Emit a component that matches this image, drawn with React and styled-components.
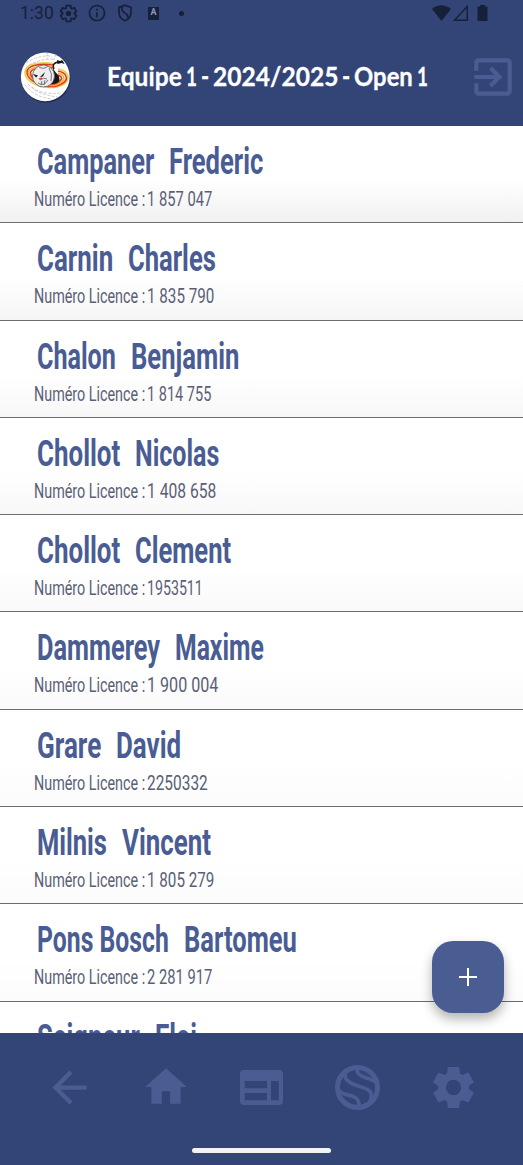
import React, { useLayoutEffect, useRef, useState } from "react";
import styled, { createGlobalStyle } from "styled-components";
import { MdArrowBack, MdHome, MdExitToApp, MdInfoOutline } from "react-icons/md";

const NAVY = "#334577";
const SLATE = "#4a5d92";
const INK = "#17203a";

const GlobalStyle = createGlobalStyle`
  * { box-sizing: border-box; }
  html, body { margin: 0; padding: 0; background: ${NAVY}; }
  body { font-family: Roboto, sans-serif; overflow: hidden; }
  svg { display: block; flex: none; }
`;

const Screen = styled.div`
  width: 523px;
  height: 1165px;
  display: flex;
  flex-direction: column;
  overflow: hidden;
  background: ${NAVY};
  position: relative;
`;

const StatusBar = styled.div`
  height: 28px;
  flex: none;
  display: flex;
  align-items: center;
  justify-content: space-between;
  padding: 0 33px 2px 20px;
  color: ${INK};
`;

const StatusGroup = styled.div`
  display: flex;
  align-items: center;
`;

const Clock = styled.div`
  width: 39px;
  font-size: 18px;
  line-height: 26px;
  height: 26px;
`;

const InfoSlot = styled.div`
  margin: 0 10px 0 9px;
`;

const Header = styled.header`
  height: 98px;
  flex: none;
  display: flex;
  align-items: center;
  justify-content: space-between;
  padding: 0 5px 0 20px;
  color: ${SLATE};
`;

const Title = styled.h1`
  margin: 0 5px 3px 0;
  height: 40px;
  display: flex;
  gap: 4px;
  font: 700 27.5px/40px Lato, sans-serif;
  -webkit-text-stroke: 0.3px #fff;
  color: #fff;
`;

const List = styled.main`
  height: 907px;
  flex: none;
  background: #fff;
  overflow: hidden;
`;

const Row = styled.article`
  height: 97.3px;
  padding: 12px 0 0 33.5px;
  border-bottom: 1.5px solid #6d6d6f;
  background: linear-gradient(to bottom, #fff 55%, ${(p) => p.$shade} 100%);
`;

const Name = styled.h2`
  margin: 0 0 0 3.5px;
  height: 47px;
  display: flex;
  gap: 15px;
  font: 700 37.5px/46px Roboto, sans-serif;
  color: #495c93;
`;

const Licence = styled.p`
  margin: 0;
  height: 28px;
  display: flex;
  gap: 2px;
  font: 400 19.5px/29px Roboto, sans-serif;
  color: #5a5f76;
`;

const FitBox = styled.span`
  display: block;
  flex: none;
  width: ${(p) => p.$width}px;
`;

const Squeezed = styled.span`
  display: inline-block;
  white-space: pre;
  transform-origin: 0 50%;
`;

const AddButton = styled.button`
  position: absolute;
  left: 432px;
  top: 941px;
  width: 72px;
  height: 72px;
  padding: 0;
  border: 0;
  border-radius: 21px;
  background: ${SLATE};
  color: #fff;
  display: flex;
  align-items: center;
  justify-content: center;
  box-shadow: 0 6px 12px rgba(0, 0, 0, 0.3);
`;

const NavBar = styled.nav`
  flex: 1;
  background: ${NAVY};
  display: flex;
  flex-direction: column;
  align-items: center;
`;

const NavItems = styled.div`
  width: 100%;
  height: 108px;
  padding: 0 21.5px;
  display: grid;
  grid-template-columns: repeat(5, 1fr);
  place-items: center;
  color: ${SLATE};
`;

const HomeIndicator = styled.div`
  width: 139px;
  height: 5px;
  margin-top: 7px;
  border-radius: 3px;
  background: #f2f2f4;
`;

function Fit({ width, children }) {
  const ref = useRef(null);
  const [scale, setScale] = useState(1);
  useLayoutEffect(() => {
    const measure = () => {
      if (ref.current) setScale(width / ref.current.offsetWidth);
    };
    measure();
    document.fonts?.ready.then(measure);
  }, [width]);
  return (
    <FitBox $width={width}>
      <Squeezed ref={ref} style={{ transform: `scaleX(${scale})` }}>
        {children}
      </Squeezed>
    </FitBox>
  );
}

const ClubLogo = () => (
  <svg width="51" height="52" viewBox="0 0 51 52" fill="none">
    <circle cx="26" cy="27" r="24.6" fill="#17203a" opacity=".6" />
    <circle cx="25.3" cy="25.8" r="24.4" fill="#fff" />
    <g stroke="#b4b4b8" strokeWidth=".7" strokeDasharray="3 1.5">
      <path d="M6 12Q18 4 32 5M9 14Q20 8 34 8M27 2v6M36 3l-2 6M5 34Q14 46 32 48M8 33Q18 44 38 46M12 36Q20 44 42 42" />
    </g>
    <g strokeWidth="1.6">
      <path d="M33 12.500C17 10 5 14 5 21s7 12 17 15" stroke="#e9d04a" />
      <path d="M33 14C18 12 7 15 7 21s6 10 15 13" stroke="#dd3b22" />
      <path d="M33 15.500C20 14 8.500 17 8.500 21.500s5 8 12 11" stroke="#f0b63a" />
      <path d="M33 17C20 15.500 10.500 18 10.500 22s4 7 10 9" stroke="#dd3b22" />
      <path d="M38 18c12 2 12 11 6 15-6 4-13 4-20 3" stroke="#e9d04a" />
      <path d="M38 20c10 2 10 9 5 12-5 3.500-12 4-18 3" stroke="#dd3b22" />
      <path d="M38 22c7 2 7 6 3.500 9-4 3-10 4-15 3" stroke="#f0b63a" />
      <path d="M38 24c5 2 4 4 2 6-4 3-8 4-13 3" stroke="#dd3b22" />
    </g>
    <path d="M33 16c1 6 7 7 6.500 13-1 3-4 4-8 4l2-5z" fill="#15151a" />
    <circle cx="23.500" cy="25" r="11" fill="#ededee" stroke="#555" strokeWidth=".8" />
    <path d="M34 18c-2-4 0-7 6-7" stroke="#15151a" strokeWidth="1.400" />
    <path d="M37 9l3 1 2-1 1.500 2 1 2-3-1-4 1z" fill="#15151a" />
    <path d="M13 23l5 1.500-2 2zM25 21l-5 5 3-.5z" fill="#15151a" />
    <path d="M18 32q6 4 10-3M21 34l1-4M24 34l1-5M29 17q4 6 2 13M19 16q5 3 9-1M20 29q4-3 7-1" stroke="#55555b" strokeWidth=".8" />
    <path d="M19 28l3-1" stroke="#d44" strokeWidth="1.500" />
  </svg>
);

const ShieldIcon = () => (
  <svg width="16" height="18" viewBox="0 0 16 18" fill="none" stroke="currentColor" strokeWidth="1.7">
    <path d="M8 1.200 14 3.400v5c0 4-2.400 6.800-6 8.300-3.600-1.500-6-4.300-6-8.300v-5z" />
    <path d="M5 2.500v3c0 4 6 3 6 7.500v1.500" />
  </svg>
);

const LetterBadge = styled.div`
  width: 11px;
  height: 13px;
  background: currentColor;
  display: flex;
  justify-content: center;
  margin-left: 15px;
  span { font: 700 9px/11px Roboto, sans-serif; color: #8b98bb; }
`;

const Dot = styled.div`
  width: 5px;
  height: 5px;
  border-radius: 50%;
  margin-left: 20px;
  background: currentColor;
`;

const SignalIcons = () => (
  <svg width="58" height="18" viewBox="0 0 58 18" fill="currentColor">
    <path d="M0 5Q9-2.500 19 5L9.500 17z" />
    <path d="M35.200 2.500v13.700H22.500z" fill="none" stroke="currentColor" strokeWidth="1.500" />
    <path d="M48 1h5v1.500h2.500V17H45.500V2.500H48z" />
  </svg>
);

const PanelsIcon = () => (
  <svg width="43" height="35" viewBox="0 0 43 35" fill="currentColor" fillRule="evenodd">
    <path d="M4 0h35a4 4 0 0 1 4 4v27a4 4 0 0 1-4 4H4a4 4 0 0 1-4-4V4a4 4 0 0 1 4-4zM4.700 11v7.300H27V11zM4.700 23v7.300H27V23zM31 11v19.300h7.800V11z" />
  </svg>
);

const BallIcon = () => (
  <svg width="45" height="45" viewBox="0 0 45 45" fill="none" stroke="currentColor">
    <circle cx="22.500" cy="22.500" r="20" strokeWidth="5" />
    <g strokeWidth="3.800">
      <path d="M22.300 3C21.500 8 24 10.500 30 12.500 35.500 14.200 39 15 41.500 18" />
      <path d="M10.500 8C9 15 14 18 22.500 20.800 31 23.500 40 25 35 37" />
      <path d="M4 25.500C8 30 12 29.500 17 31 22.500 32.800 25 35.500 23.500 42" />
    </g>
  </svg>
);

const GEAR_BODY =
  "m370-80-16-128q-13-5-24.500-12T307-235l-119 50L78-375l103-78q-1-7-1-13.500v-27q0-6.500 1-13.500L78-585l110-190 119 50q11-8 23-15t24-12l16-128h220l16 128q13 5 24.500 12t22.500 15l119-50 110 190-103 78q1 7 1 13.500v27q0 6.500-2 13.500l103 78-110 190-118-50q-11 8-23 15t-24 12L590-80H370Z";

const GearIcon = () => (
  <svg width="49" height="49" viewBox="0 -960 960 960" fill="currentColor">
    <path d={`${GEAR_BODY}m110-250q62 0 106-44t44-106-44-106-106-44-106 44-44 106 44 106 106 44Z`} transform="translate(0 0)" fillRule="evenodd" />
  </svg>
);

const StatusGearIcon = () => (
  <svg width="19" height="19" viewBox="20 -940 920 920" fill="none" stroke="currentColor" strokeLinejoin="round">
    <path d={GEAR_BODY} strokeWidth="90" transform="translate(24 -24) scale(.95)" />
    <circle cx="480" cy="-480" r="130" fill="currentColor" />
  </svg>
);

const titleWords = [
  ["Equipe", 75],
  ["1", 11],
  ["-", 8],
  ["2024/2025", 125],
  ["-", 8],
  ["Open", 59],
  ["1", 11],
];

const players = [
  ["Campaner", 117, "Frederic", 94, "1 857 047", 65, "#f1f1f2"],
  ["Carnin", 76, "Charles", 88, "1 835 790", 67, "#f5f5f6"],
  ["Chalon", 79, "Benjamin", 108, "1 814 755", 64, "#f7f7f8"],
  ["Chollot", 83, "Nicolas", 84, "1 408 658", 69, "#f8f8f9"],
  ["Chollot", 83, "Clement", 96, "1953511", 56, "#f9f9fa"],
  ["Dammerey", 123, "Maxime", 89, "1 900 004", 71, "#fafafb"],
  ["Grare", 64, "David", 65, "2250332", 61, "#fbfbfc"],
  ["Milnis", 70, "Vincent", 89, "1 805 279", 67, "#fbfbfc"],
  ["Pons Bosch", 132, "Bartomeu", 113, "2 281 917", 65, "#fcfcfd"],
  ["Seigneur", 103, "Eloi", 42, "", 0, "#fff"],
];

export default function App() {
  return (
    <Screen>
      <GlobalStyle />
      <StatusBar>
        <StatusGroup>
          <Clock><Fit width={34}>1:30</Fit></Clock>
          <StatusGearIcon />
          <InfoSlot><MdInfoOutline size={20} /></InfoSlot>
          <ShieldIcon />
          <LetterBadge><span>A</span></LetterBadge>
          <Dot />
        </StatusGroup>
        <SignalIcons />
      </StatusBar>
      <Header>
        <ClubLogo />
        <Title>
          {titleWords.map(([word, width], i) => (
            <Fit key={i} width={width}>{word}</Fit>
          ))}
        </Title>
        <MdExitToApp size={50} />
      </Header>
      <List>
        {players.map(([last, lastWidth, first, firstWidth, licence, licenceWidth, shade]) => (
          <Row key={last + first} $shade={shade}>
            <Name>
              <Fit width={lastWidth}>{last}</Fit>
              <Fit width={firstWidth}>{first}</Fit>
            </Name>
            {licence && (
              <Licence>
                <Fit width={111}>Numéro Licence :</Fit>
                <Fit width={licenceWidth}>{licence}</Fit>
              </Licence>
            )}
          </Row>
        ))}
      </List>
      <NavBar>
        <NavItems>
          <MdArrowBack size={51} />
          <MdHome size={50} />
          <PanelsIcon />
          <BallIcon />
          <GearIcon />
        </NavItems>
        <HomeIndicator />
      </NavBar>
      <AddButton aria-label="Ajouter">
        <svg width="18" height="18" viewBox="0 0 18 18" stroke="currentColor" strokeWidth="2"><path d="M9 0v18M0 9h18" /></svg>
      </AddButton>
    </Screen>
  );
}
